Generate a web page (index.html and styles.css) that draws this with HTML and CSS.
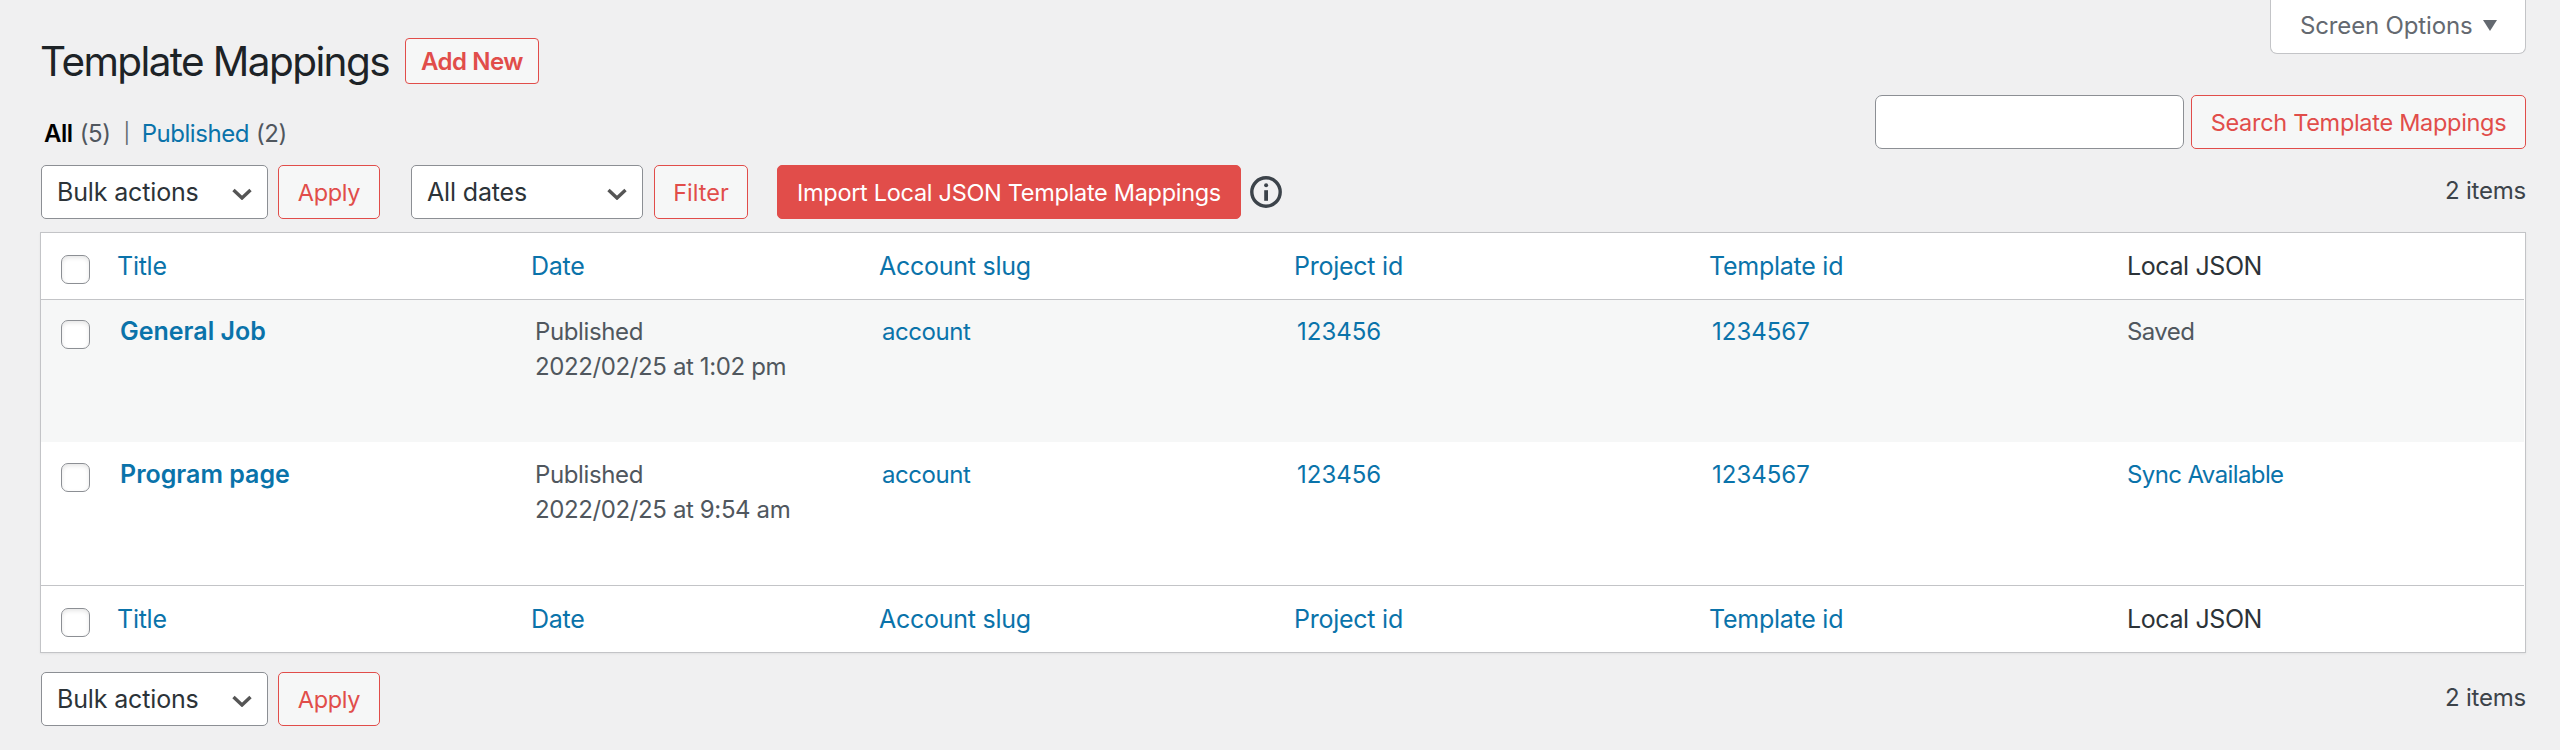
FILE: index.html
```html
<!DOCTYPE html>
<html lang="en">
<head>
<meta charset="utf-8">
<title>Template Mappings</title>
<link rel="stylesheet" href="styles.css">
</head>
<body>
<main class="wrap">
  <header class="top">
    <div class="heading">
      <h1 class="page-title">Template Mappings</h1>
      <a class="add-new">Add New</a>
    </div>
    <div class="screen-options"><span>Screen Options</span><svg class="tri" viewBox="0 0 14 11"><path d="M0 0H14L7 11Z"/></svg></div>
  </header>

  <div class="subnav">
    <div class="views"><b class="current">All</b><span class="count">(5)</span><span class="bar">|</span><a class="link published">Published</a><span class="count">(2)</span></div>
    <div class="search">
      <input class="search-input" type="text" aria-label="Search">
      <button class="btn search-btn">Search Template Mappings</button>
    </div>
  </div>

  <div class="toolbar">
    <div class="select bulk"><span>Bulk actions</span><svg class="chev" viewBox="0 0 20 12"><path d="M1.5 2L10 10L18.500 2"/></svg></div>
    <button class="btn apply">Apply</button>
    <div class="select dates"><span>All dates</span><svg class="chev" viewBox="0 0 20 12"><path d="M1.5 2L10 10L18.500 2"/></svg></div>
    <button class="btn filter">Filter</button>
    <button class="btn primary">Import Local JSON Template Mappings</button>
    <svg class="info" viewBox="0 0 32 32"><circle cx="16" cy="16" r="14.2"/><path d="M14.200 14.200h3.800v10.600h-3.800z"/><circle class="dot" cx="16.1" cy="9.2" r="2"/></svg>
    <span class="items">2 items</span>
  </div>

  <section class="table">
    <div class="row head">
      <i class="check"></i><a class="link">Title</a><a class="link">Date</a><a class="link">Account slug</a><a class="link">Project id</a><a class="link">Template id</a><span class="json-head">Local JSON</span>
    </div>
    <div class="row item odd">
      <i class="check"></i><a class="link name">General Job</a><span class="cell date">Published<br>2022/02/25 at 1:02 pm</span><a class="link cell">account</a><a class="link cell num">123456</a><a class="link cell num">1234567</a><span class="json">Saved</span>
    </div>
    <div class="row item even">
      <i class="check"></i><a class="link name">Program page</a><span class="cell date">Published<br>2022/02/25 at 9:54 am</span><a class="link cell">account</a><a class="link cell num">123456</a><a class="link cell num">1234567</a><a class="link json">Sync Available</a>
    </div>
    <div class="row head foot">
      <i class="check"></i><a class="link">Title</a><a class="link">Date</a><a class="link">Account slug</a><a class="link">Project id</a><a class="link">Template id</a><span class="json-head">Local JSON</span>
    </div>
  </section>

  <div class="toolbar bottom">
    <div class="select bulk"><span>Bulk actions</span><svg class="chev" viewBox="0 0 20 12"><path d="M1.5 2L10 10L18.500 2"/></svg></div>
    <button class="btn apply">Apply</button>
    <span class="items">2 items</span>
  </div>
</main>
</body>
</html>
```
FILE: styles.css
```css
* { box-sizing: border-box; }
html { overflow: hidden; }
body {
  margin: 0;
  height: 750px;
  overflow: hidden;
  background: #f0f0f1;
  color: #3c434a;
  font: 24px/34px Inter, "Liberation Sans", sans-serif;
  letter-spacing: -.45px;
  white-space: nowrap;
}
.wrap { padding: 0 34px 0 41px; }
.link { color: #0a73aa; }

.top { display: flex; justify-content: space-between; align-items: flex-start; height: 95px; }
.heading { display: flex; padding-top: 38px; gap: 17px; }
.page-title { margin: 0 0 0 -1px; width: 348px; font-size: 40.5px; font-weight: 400; line-height: 47px; color: #1d2327; letter-spacing: -1.6px; }
.add-new {
  width: 134px; height: 46px; border: 1.5px solid #e14d4a; border-radius: 4px; background: #f6f7f7;
  color: #e14d4a; font-weight: 600; line-height: 45px; text-align: center;
}
.screen-options {
  display: flex; align-items: flex-start; gap: 10px; width: 256px; height: 54px; padding: 9px 0 0 29px;
  background: #fff; border: 1px solid #c3c4c7; border-top: 0; border-radius: 0 0 7px 7px; color: #646970;
  letter-spacing: -.15px;
}
.tri { width: 14px; height: 11px; margin-top: 11px; fill: #646970; }

.subnav { display: flex; justify-content: space-between; height: 54px; }
.views { display: flex; padding: 22px 0 0 3px; color: #50575e; }
.current { color: #000; font-weight: 600; }
.count { margin-left: 7px; }
.bar { margin: 0 12px 0 13px; color: #646970; font-size: 20px; line-height: 33px; }
.search { display: flex; gap: 7px; }
.search-input { width: 309px; height: 54px; border: 1.5px solid #8c8f94; border-radius: 7px; background: #fff; }

.btn {
  height: 54px; padding: 2px 0 0; border: 1.5px solid #e14d4a; border-radius: 5px; background: #f6f7f7;
  color: #e14d4a; font: inherit; font-size: 23.5px; letter-spacing: -.3px; text-align: center; white-space: nowrap;
}
.search-btn { width: 335px; }
.apply { width: 102px; margin-left: 10px; }
.filter { width: 94px; margin-left: 11px; letter-spacing: 0; }
.primary { width: 464px; margin-left: 29px; background: #e14d4a; color: #fff; }

.toolbar { display: flex; align-items: center; height: 54px; margin-top: 16px; }
.select {
  display: flex; align-items: center; justify-content: space-between; height: 54px; padding: 0 15px;
  border: 1.5px solid #8c8f94; border-radius: 5px; background: #fff; color: #2c3338; font-size: 25px;
  letter-spacing: -.15px;
}
.bulk { width: 227px; }
.dates { width: 232px; margin-left: 31px; }
.chev { width: 20px; height: 12px; margin-top: 4px; fill: none; stroke: #555; stroke-width: 3.4; }
.info { width: 32px; height: 32px; margin-left: 9px; fill: #3c434a; }
.info circle { fill: none; stroke: #3c434a; stroke-width: 3.4; }
.info .dot { fill: #3c434a; stroke: none; }
.items { margin-left: auto; padding-bottom: 3px; letter-spacing: -.2px; }

.table {
  margin: 13px 0 0 -1px; padding-right: 1px; height: 421px; background: #fff;
  border: 1px solid #c3c4c7; box-shadow: 0 1px 2px rgba(0,0,0,.06);
}
.row { display: grid; grid-template-columns: 76px 414px 348px 415px 415px 418px 1fr; align-items: start; }
.head { height: 67px; padding-top: 16px; border-bottom: 1px solid #c3c4c7; font-size: 25px; color: #2c3338; letter-spacing: -.25px; }
.head .check { margin-top: 6px; }
.json-head { letter-spacing: -.4px; }
.foot { border-bottom: 0; border-top: 1px solid #c3c4c7; }
.item { height: 142px; padding-top: 14px; color: #50575e; line-height: 35px; }
.item .check { margin-top: 6px; }
.odd { background: #f6f7f7; }
.even { height: 143px; padding-top: 15px; }
.check {
  width: 29px; height: 29px; margin-left: 20px; border: 1.5px solid #8c8f94; border-radius: 7px;
  background: #fff; box-shadow: inset 0 2px 4px rgba(0,0,0,.1);
}
.cell { padding-left: 3px; }
.date { padding-left: 4px; letter-spacing: -.38px; }
.num { letter-spacing: 0; }
.json { letter-spacing: -.6px; }
.name { padding-left: 3px; font-size: 25px; font-weight: 600; letter-spacing: 0; }
.bottom { margin-top: 19px; }
```
